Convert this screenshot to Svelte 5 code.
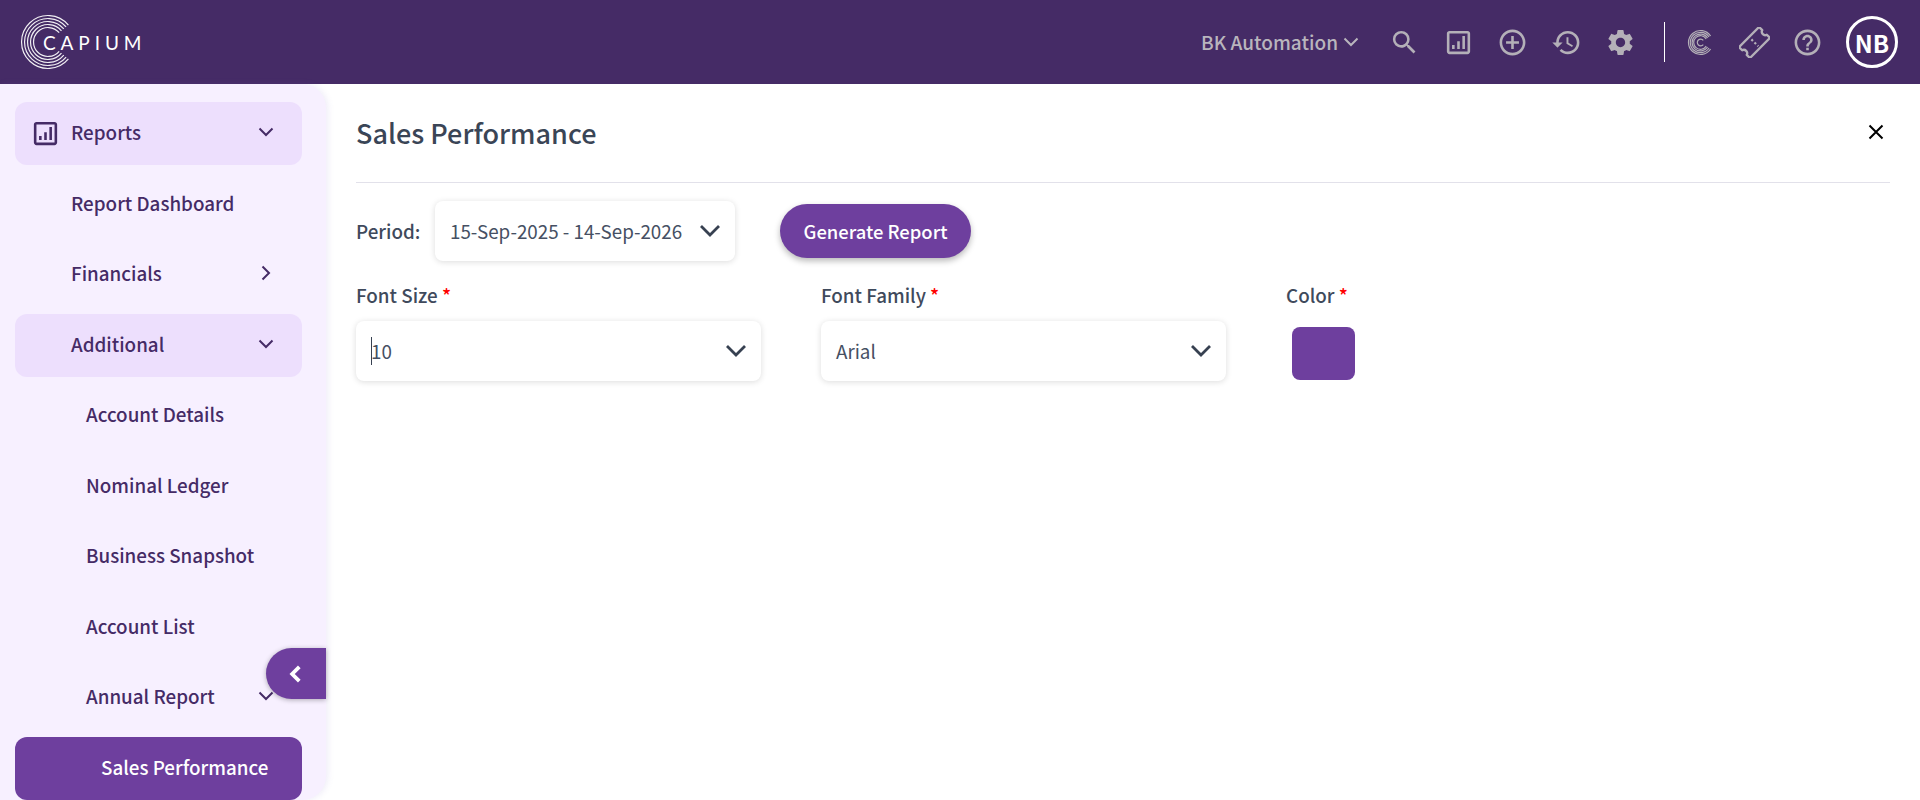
<script lang="ts">
	const reportPath = 'M19 3H5c-1.1 0-2 .9-2 2v14c0 1.1.9 2 2 2h14c1.1 0 2-.9 2-2V5c0-1.1-.9-2-2-2zm0 16H5V5h14v14zM7 14h2v3H7zm4-3h2v6h-2zm4-4h2v10h-2z';

	const topIcons = [
		{ name: 'search', d: 'M15.5 14h-.79l-.28-.27A6.471 6.471 0 0 0 16 9.5 6.5 6.5 0 1 0 9.5 16c1.61 0 3.09-.59 4.23-1.57l.27.28v.79l5 4.99L20.49 19l-4.99-5zm-6 0C7.01 14 5 11.99 5 9.5S7.01 5 9.5 5 14 7.01 14 9.5 11.99 14 9.5 14z' },
		{ name: 'report', d: reportPath },
		{ name: 'add', d: 'M13 7h-2v4H7v2h4v4h2v-4h4v-2h-4V7zm-1-5C6.48 2 2 6.48 2 12s4.48 10 10 10 10-4.48 10-10S17.52 2 12 2zm0 18c-4.41 0-8-3.59-8-8s3.59-8 8-8 8 3.59 8 8-3.59 8-8 8z' },
		{ name: 'history', d: 'M13 3a9 9 0 0 0-9 9H1l3.89 3.89.07.14L9 12H6c0-3.87 3.13-7 7-7s7 3.13 7 7-3.13 7-7 7c-1.93 0-3.68-.79-4.94-2.06l-1.42 1.42A8.954 8.954 0 0 0 13 21a9 9 0 0 0 0-18zm-1 5v5l4.28 2.54.72-1.21-3.5-2.08V8H12z' },
		{ name: 'settings', d: 'M19.14 12.94c.04-.3.06-.61.06-.94 0-.32-.02-.64-.07-.94l2.03-1.58a.49.49 0 0 0 .12-.61l-1.92-3.32a.488.488 0 0 0-.59-.22l-2.39.96c-.5-.38-1.03-.7-1.62-.94l-.36-2.54a.484.484 0 0 0-.48-.41h-3.84c-.24 0-.43.17-.47.41l-.36 2.54c-.59.24-1.13.57-1.62.94l-2.39-.96c-.22-.08-.47 0-.59.22L2.74 8.87c-.12.21-.08.47.12.61l2.03 1.58c-.05.3-.09.63-.09.94s.02.64.07.94l-2.03 1.58a.49.49 0 0 0-.12.61l1.92 3.32c.12.22.37.29.59.22l2.39-.96c.5.38 1.03.7 1.62.94l.36 2.54c.05.24.24.41.48.41h3.84c.24 0 .44-.17.47-.41l.36-2.54c.59-.24 1.13-.56 1.62-.94l2.39.96c.22.08.47 0 .59-.22l1.92-3.32c.12-.22.07-.47-.12-.61l-2.01-1.58zM12 15.6c-1.98 0-3.6-1.62-3.6-3.6s1.62-3.6 3.6-3.6 3.6 1.62 3.6 3.6-1.62 3.6-3.6 3.6z' }
	];

	const menu = [
		{ label: 'Report Dashboard', level: 1 },
		{ label: 'Financials', level: 1, arrow: 'right' },
		{ label: 'Additional', level: 1, arrow: 'down', open: true },
		{ label: 'Account Details', level: 2 },
		{ label: 'Nominal Ledger', level: 2 },
		{ label: 'Business Snapshot', level: 2 },
		{ label: 'Account List', level: 2 },
		{ label: 'Annual Report', level: 2, arrow: 'down' }
	];

	// open arc around the centre, gap on the right
	function ring(cx: number, cy: number, r: number, ex: number, ey: number) {
		return `M${cx + r * ex} ${cy - r * ey}A${r} ${r} 0 1 0 ${cx + r * ex} ${cy + r * ey}`;
	}

	const logoRings = [26.5, 23.5, 20.5, 17.5, 14.5].map((r) => ring(28, 28, r, 0.77, 0.64));
	const coinRings = [12, 10.2, 8.4, 6.8].map((r) => ring(15, 15, r, 0.84, 0.54));
</script>

<div class="page">
	<header class="topbar">
		<div class="logo">
			<svg width="56" height="56" viewBox="0 0 56 56" fill="none" stroke="#fff" stroke-width="1.2" opacity="0.92">
				{#each logoRings as d}
					<path {d} />
				{/each}
			</svg>
			<span class="logo-text">CAPIUM</span>
		</div>
		<div class="top-right">
			<button class="company">
				BK Automation
				<svg width="20" height="20" viewBox="0 0 20 20" fill="none" stroke="currentColor" stroke-width="2"><path d="M3.5 6.500l6.500 6.500 6.500-6.500" /></svg>
			</button>
			<div class="icons">
				{#each topIcons as icon}
					<svg class="top-icon" viewBox="0 0 24 24" fill="currentColor"><path d={icon.d} /></svg>
				{/each}
			</div>
			<div class="divider"></div>
			<div class="icons second">
				<svg class="top-icon" viewBox="0 0 31 31" fill="none" stroke="currentColor">
					<g transform="translate(.5 .5)">
						{#each coinRings as d}
							<path stroke-width="1.200" {d} />
						{/each}
						<path stroke-width="1.200" d="M17.800 12.800A3.400 3.400 0 1 0 17.800 17.200" />
					</g>
				</svg>
				<svg class="top-icon" viewBox="0 0 24 24" fill="none" stroke="currentColor" stroke-width="1.800" stroke-linejoin="round">
					<g transform="rotate(-45 12 12)">
						<path d="M1 6h22v3.500a2.600 2.600 0 0 0 0 5V18H1v-3.500a2.600 2.600 0 0 0 0-5z" />
						<path stroke-dasharray="1.700 1.700" d="M12 8.600v7.500" stroke-width="1.700" />
					</g>
				</svg>
				<svg class="top-icon" viewBox="0 0 24 24" fill="currentColor"><path d="M11 18h2v-2h-2v2zm1-16C6.480 2 2 6.480 2 12s4.480 10 10 10 10-4.480 10-10S17.520 2 12 2zm0 18c-4.410 0-8-3.590-8-8s3.590-8 8-8 8 3.590 8 8-3.590 8-8 8zm0-14c-2.210 0-4 1.790-4 4h2c0-1.100.9-2 2-2s2 .9 2 2c0 2-3 1.750-3 5h2c0-2.250 3-2.500 3-5 0-2.210-1.790-4-4-4z" /></svg>
			</div>
			<div class="avatar">NB</div>
		</div>
	</header>

	<div class="body">
		<aside class="sidebar">
			<nav class="menu">
				<div class="item open">
					<svg class="report-icon" viewBox="0 0 24 24" fill="currentColor"><path d={reportPath} /></svg>
					<span>Reports</span>
					<svg class="arrow" viewBox="0 0 20 20" fill="none" stroke="currentColor" stroke-width="2"><path d="M3.500 6.500L10 13l6.500-6.500" /></svg>
				</div>
				{#each menu as m}
					<div class="item level{m.level}" class:open={m.open}>
						<span>{m.label}</span>
						{#if m.arrow === 'down'}
							<svg class="arrow" viewBox="0 0 20 20" fill="none" stroke="currentColor" stroke-width="2"><path d="M3.500 6.500L10 13l6.500-6.500" /></svg>
						{:else if m.arrow === 'right'}
							<svg class="arrow" viewBox="0 0 20 20" fill="none" stroke="currentColor" stroke-width="2"><path d="M6.500 3.500L13 10l-6.500 6.500" /></svg>
						{/if}
					</div>
				{/each}
				<div class="item active"><span>Sales Performance</span></div>
			</nav>
			<button class="collapse" aria-label="Collapse">
				<svg width="22" height="22" viewBox="0 0 20 20" fill="none" stroke="#fff" stroke-width="3.400"><path d="M13 3.500L6.500 10l6.500 6.500" /></svg>
			</button>
		</aside>

		<main class="content">
			<div class="title-row">
				<h1>Sales Performance</h1>
				<button class="close" aria-label="Close">
					<svg width="18" height="18" viewBox="0 0 18 18" stroke="#000" stroke-width="2"><path d="M2.500 2.500l13 13M15.500 2.500l-13 13" /></svg>
				</button>
			</div>

			<div class="period-row">
				<span class="field-label period-label">Period:</span>
				<div class="select period">
					<span>15-Sep-2025 - 14-Sep-2026</span>
					<svg class="chev" viewBox="0 0 22 22" fill="none" stroke="currentColor" stroke-width="2.800"><path d="M2 6l9 9 9-9" /></svg>
				</div>
				<button class="generate">Generate Report</button>
			</div>

			<div class="fields">
				<div class="field">
					<span class="field-label">Font Size <em>*</em></span>
					<div class="select">
						<span class="with-caret"><i class="caret"></i>10</span>
						<svg class="chev" viewBox="0 0 22 22" fill="none" stroke="currentColor" stroke-width="2.800"><path d="M2 6l9 9 9-9" /></svg>
					</div>
				</div>
				<div class="field">
					<span class="field-label">Font Family <em>*</em></span>
					<div class="select">
						<span>Arial</span>
						<svg class="chev" viewBox="0 0 22 22" fill="none" stroke="currentColor" stroke-width="2.800"><path d="M2 6l9 9 9-9" /></svg>
					</div>
				</div>
				<div class="field color">
					<span class="field-label">Color <em>*</em></span>
					<div class="swatch"></div>
				</div>
			</div>
		</main>
	</div>
</div>

<style>
	:global(body) {
		margin: 0;
		background: #fff;
		font-family: "Noto Sans CJK SC", "Noto Sans", sans-serif;
	}

	button {
		font-family: inherit;
		border: none;
		background: none;
		padding: 0;
	}

	.page {
		height: 800px;
		overflow: hidden;
		display: flex;
		flex-direction: column;
	}

	.topbar {
		height: 84px;
		flex: none;
		background: #452b66;
		display: flex;
		align-items: center;
		justify-content: space-between;
		padding: 0 22px 0 20px;
	}

	.logo {
		display: flex;
		align-items: center;
		color: #fff;
	}

	.logo-text {
		font-family: Lato, sans-serif;
		font-weight: 400;
		font-size: 19px;
		letter-spacing: 4.9px;
		margin-left: -33px;
		line-height: 1;
	}

	.top-right {
		display: flex;
		align-items: center;
		color: #b4b0b8;
	}

	.company {
		display: flex;
		align-items: center;
		gap: 3px;
		color: #b9b5bd;
		font-size: 19px;
		font-weight: 500;
		line-height: 26px;
		margin-right: 28px;
	}

	.icons {
		display: flex;
		align-items: center;
		gap: 23px;
	}

	.icons.second {
		gap: 22.5px;
	}

	.top-icon {
		width: 31px;
		height: 31px;
		color: #b4b0b8;
	}

	.divider {
		width: 1px;
		height: 40px;
		background: #fff;
		margin: 0 20px 0 28px;
	}

	.avatar {
		width: 46px;
		height: 46px;
		border: 3px solid #fff;
		border-radius: 50%;
		color: #fff;
		font-size: 24px;
		font-weight: 700;
		display: flex;
		align-items: center;
		justify-content: center;
		margin-left: 23px;
	}

	.body {
		flex: 1;
		display: flex;
		min-height: 0;
	}

	.sidebar {
		position: relative;
		width: 326px;
		flex: none;
		background: #f7f0ff;
		border-radius: 0 24px 24px 0;
		box-shadow: 2px 0 6px rgba(120, 110, 200, 0.12);
		box-sizing: border-box;
		padding: 18px 24px 0 15px;
	}

	.menu {
		display: flex;
		flex-direction: column;
		gap: 7.55px;
	}

	.item {
		height: 63px;
		border-radius: 12px;
		display: flex;
		align-items: center;
		color: #452b66;
		font-size: 18.8px;
		font-weight: 500;
		line-height: 24px;
		padding: 0 26px 3px 56px;
		box-sizing: border-box;
		position: relative;
		white-space: nowrap;
	}

	.item.open {
		background: #eddffd;
	}

	.level2 {
		padding-left: 71px;
	}

	.active {
		background: #6e3f9e;
		color: #fff;
		padding-left: 86px;
		border-radius: 12px;
	}

	.arrow {
		width: 20px;
		height: 20px;
		margin-left: auto;
	}

	.report-icon {
		position: absolute;
		left: 15px;
		top: 16px;
		width: 31px;
		height: 31px;
	}

	.collapse {
		position: absolute;
		right: 0;
		top: 564px;
		width: 60px;
		height: 51px;
		background: #6e3f9e;
		border-radius: 26px 0 0 26px;
		box-shadow: 0 1px 5px rgba(0, 0, 0, 0.3);
		display: flex;
		align-items: center;
		padding-left: 19px;
		box-sizing: border-box;
	}

	.content {
		flex: 1;
		min-width: 0;
		box-sizing: border-box;
		padding: 0 30px 0 30px;
		color: #374151;
	}

	.title-row {
		height: 99px;
		border-bottom: 1px solid #e2e1ea;
		display: flex;
		align-items: center;
		justify-content: space-between;
		box-sizing: border-box;
		padding-right: 5px;
		padding-bottom: 1px;
	}

	h1 {
		margin: 0;
		font-size: 27px;
		font-weight: 500;
		line-height: 36px;
		color: #3a4556;
	}

	.close {
		display: flex;
		margin-bottom: 1px;
	}

	.period-row {
		display: flex;
		align-items: center;
		margin-top: 18px;
	}

	.field-label {
		display: block;
		font-size: 18.8px;
		font-weight: 500;
		line-height: 26px;
		color: #3f4a5c;
	}

	.field-label em {
		color: #f00;
		font-style: normal;
	}

	.period-label {
		width: 79px;
		flex: none;
	}

	.select {
		width: 405px;
		height: 60px;
		box-sizing: border-box;
		background: #fff;
		border-radius: 8px;
		box-shadow: 0 1px 6px rgba(0, 0, 0, 0.14);
		display: flex;
		align-items: center;
		justify-content: space-between;
		padding: 0 14px 0 15px;
		font-size: 18.8px;
		color: #465063;
		line-height: 26px;
	}

	.select.period {
		width: 300px;
		padding-right: 14px;
	}

	.chev {
		width: 22px;
		height: 22px;
		color: #374151;
		flex: none;
	}

	.with-caret {
		position: relative;
	}

	.caret {
		position: absolute;
		left: 0;
		top: -1px;
		width: 1px;
		height: 28px;
		background: #374151;
	}

	.generate {
		margin-left: 45px;
		width: 191px;
		height: 54px;
		border-radius: 27px;
		background: #6e3f9e;
		color: #fff;
		font-size: 18.4px;
		font-weight: 500;
		box-shadow: 0 3px 6px rgba(0, 0, 0, 0.28);
	}

	.fields {
		display: flex;
		gap: 60px;
		margin-top: 21px;
	}

	.field .field-label {
		margin-bottom: 13px;
	}

	.color .swatch {
		width: 63px;
		height: 53px;
		margin: 19px 0 0 6px;
		background: #6e3f9e;
		border-radius: 8px;
	}
</style>
